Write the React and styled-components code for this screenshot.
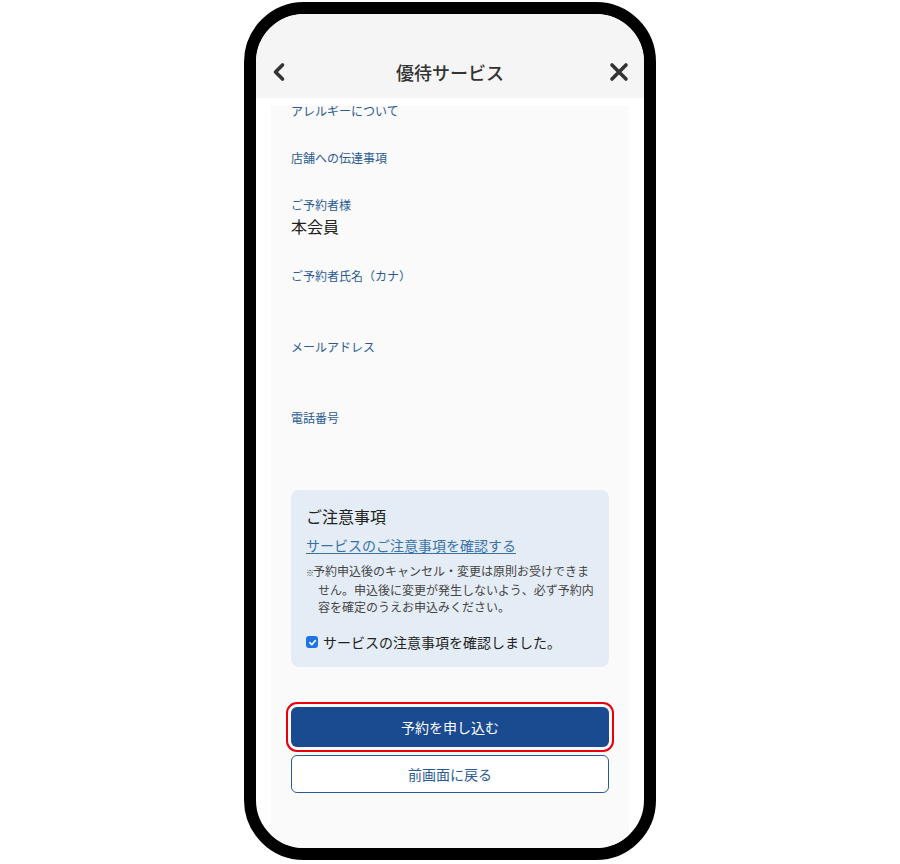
import React from "react";
import styled, { createGlobalStyle } from "styled-components";

const Global = createGlobalStyle`
  html, body { margin: 0; padding: 0; background: #ffffff; }
  body { font-family: "Noto Sans CJK JP", "Noto Sans", sans-serif; }
  * { box-sizing: border-box; }
`;

const Stage = styled.div`
  width: 900px;
  height: 864px;
  display: flex;
  justify-content: center;
  padding-top: 2px;
`;

const Phone = styled.div`
  width: 412px;
  height: 858px;
  border: 12px solid #000;
  border-radius: 60px;
  overflow: hidden;
  background: #ffffff;
  display: flex;
  flex-direction: column;
`;

const Header = styled.header`
  height: 84px;
  flex: none;
  background: #f5f5f5;
  display: grid;
  grid-template-columns: 40px 1fr 40px;
  align-items: center;
  padding: 32px 15px 0 15px;
`;

const IconButton = styled.button`
  border: none;
  background: none;
  padding: 0;
  width: 40px;
  height: 24px;
  display: flex;
  align-items: center;
  justify-content: ${(p) => (p.$right ? "flex-end" : "flex-start")};
  color: #333;
  cursor: pointer;
`;

const Title = styled.h1`
  margin: 0;
  text-align: center;
  font-size: 18px;
  line-height: 24px;
  font-weight: 500;
  color: #333;
`;

const Body = styled.div`
  flex: 1;
  padding: 8px 15px 0 15px;
  min-height: 0;
  display: flex;
`;

const Panel = styled.main`
  flex: 1;
  background: #fafafa;
  overflow: hidden;
  padding: 0 20px;
`;

const Field = styled.div`
  margin-bottom: 29px;
  &:first-child { margin-top: -4px; }
`;

const Label = styled.div`
  font-size: 12px;
  line-height: 18px;
  color: #2b5a92;
`;

const Value = styled.div`
  font-size: 16px;
  line-height: 24px;
  min-height: 24px;
  color: #222;
`;

const Notice = styled.section`
  margin-top: 39px;
  background: #e4ecf5;
  border-radius: 8px;
  padding: 14px 15px 15px;
`;

const NoticeTitle = styled.h2`
  margin: 0 0 7px;
  font-size: 16px;
  line-height: 24px;
  font-weight: 400;
  color: #222;
`;

const NoticeLink = styled.a`
  display: block;
  font-size: 14px;
  line-height: 20px;
  color: #3a72a6;
  text-decoration: underline;
  text-underline-offset: 2px;
`;

const NoteText = styled.p`
  margin: 7px 0 0;
  font-size: 12px;
  line-height: 17px;
  color: #444;
  padding-left: 12px;
  text-indent: -12px;
`;

const Mark = styled.span`
  font-size: 8px;
  display: inline-block;
  width: 7px;
  text-indent: 0;
`;

const CheckRow = styled.label`
  margin-top: 17px;
  display: flex;
  align-items: center;
  gap: 5px;
  font-size: 14px;
  line-height: 20px;
  color: #222;
`;

const CheckBox = styled.span`
  width: 12px;
  height: 12px;
  border-radius: 3px;
  background: #1e74e6;
  display: flex;
  align-items: center;
  justify-content: center;
`;

const Actions = styled.div`
  margin-top: 40px;
  display: flex;
  flex-direction: column;
  gap: 8px;
`;

const Button = styled.button`
  width: 100%;
  border-radius: 6px;
  font-family: inherit;
  font-size: 14px;
  cursor: pointer;
  height: ${(p) => (p.$primary ? "40px" : "38px")};
  background: ${(p) => (p.$primary ? "#1a4a90" : "#ffffff")};
  color: ${(p) => (p.$primary ? "#ffffff" : "#2b5a92")};
  border: ${(p) => (p.$primary ? "none" : "1px solid #2b5a92")};
  outline: ${(p) => (p.$highlight ? "2px solid #e8000b" : "none")};
  outline-offset: 3px;
`;

const fields = [
  { label: "アレルギーについて" },
  { label: "店舗への伝達事項" },
  { label: "ご予約者様", value: "本会員" },
  { label: "ご予約者氏名（カナ）", value: "" },
  { label: "メールアドレス", value: "" },
  { label: "電話番号", value: "" },
];

export default function App() {
  return (
    <>
      <Global />
      <Stage>
        <Phone>
          <Header>
            <IconButton aria-label="戻る">
              <svg width="16" height="20" viewBox="0 0 16 20">
                <path d="M11.5 3 L4.5 10 L11.5 17" fill="none" stroke="#333" strokeWidth="3.6" strokeLinecap="round" strokeLinejoin="round" />
              </svg>
            </IconButton>
            <Title>優待サービス</Title>
            <IconButton $right aria-label="閉じる">
              <svg width="20" height="20" viewBox="0 0 20 20">
                <path d="M3 3 L17 17 M17 3 L3 17" fill="none" stroke="#333" strokeWidth="3.6" strokeLinecap="round" />
              </svg>
            </IconButton>
          </Header>
          <Body>
            <Panel>
              {fields.map((f) => (
                <Field key={f.label}>
                  <Label>{f.label}</Label>
                  {f.value !== undefined && <Value>{f.value}</Value>}
                </Field>
              ))}
              <Notice>
                <NoticeTitle>ご注意事項</NoticeTitle>
                <NoticeLink href="#">サービスのご注意事項を確認する</NoticeLink>
                <NoteText>
                  <Mark>※</Mark>予約申込後のキャンセル・変更は原則お受けできま<br />
                  せん。申込後に変更が発生しないよう、必ず予約内<br />
                  容を確定のうえお申込みください。
                </NoteText>
                <CheckRow>
                  <CheckBox>
                    <svg width="9" height="9" viewBox="0 0 10 10">
                      <path d="M2 5.2 L4.2 7.4 L8.2 2.8" fill="none" stroke="#fff" strokeWidth="1.8" strokeLinecap="round" strokeLinejoin="round" />
                    </svg>
                  </CheckBox>
                  サービスの注意事項を確認しました。
                </CheckRow>
              </Notice>
              <Actions>
                <Button $primary $highlight>予約を申し込む</Button>
                <Button>前画面に戻る</Button>
              </Actions>
            </Panel>
          </Body>
        </Phone>
      </Stage>
    </>
  );
}
